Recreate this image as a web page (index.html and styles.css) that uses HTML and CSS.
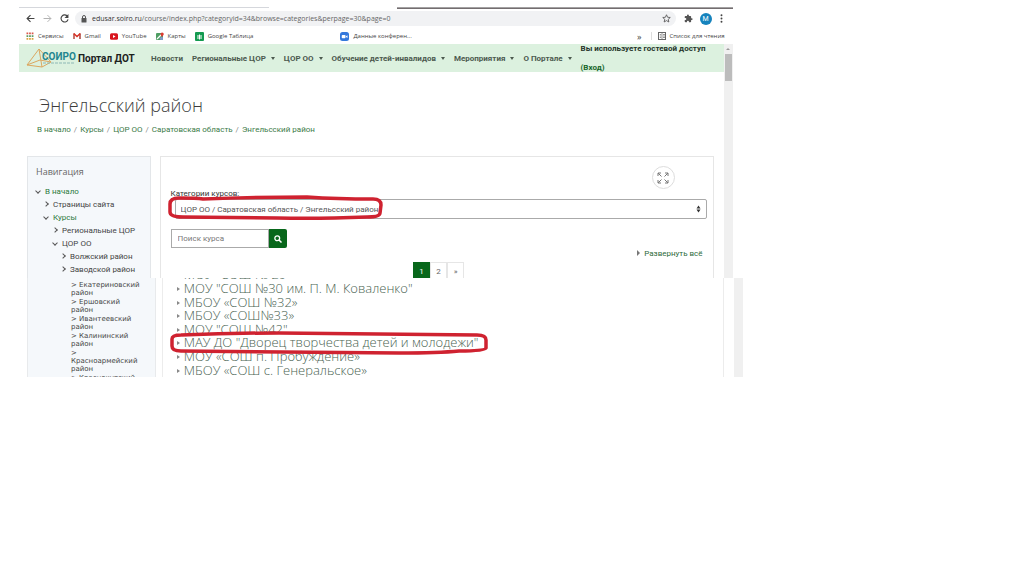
FILE: index.html
```
<!DOCTYPE html>
<html lang="ru">
<head>
  <meta charset="UTF-8">
  <meta name="viewport" content="width=device-width, initial-scale=1.0">
  <title>Энгельсский район</title>
  <link rel="stylesheet" href="styles.css">
</head>
<body>
  <div class="browser">
    <div class="tab-edge"><span class="edge-light"></span><span class="edge-dark"></span></div>
    <div class="toolbar">
      <button class="tool" aria-label="Назад"><svg width="9" height="9" viewBox="0 0 16 16"><path d="M15 8H2M8 2L2 8l6 6" fill="none" stroke="#444" stroke-width="2"/></svg></button>
      <button class="tool" aria-label="Вперёд"><svg width="9" height="9" viewBox="0 0 16 16"><path d="M1 8h13M8 2l6 6-6 6" fill="none" stroke="#aaa" stroke-width="1.6"/></svg></button>
      <button class="tool" aria-label="Обновить"><svg width="9" height="9" viewBox="0 0 16 16"><path d="M13.5 4.5A6.3 6.3 0 1 0 14.3 9.500" fill="none" stroke="#444" stroke-width="2"/><path d="M15 0v7H8z" fill="#444"/></svg></button>
      <div class="address">
        <svg width="6" height="8" viewBox="0 0 12 16"><rect x="1" y="6" width="10" height="9" rx="1" fill="#555"/><path d="M3 7V4a3 3 0 0 1 6 0v3" fill="none" stroke="#555" stroke-width="2"/></svg>
        <div class="url"><span>edusar.soiro.ru</span>/course/index.php?categoryid=34&amp;browse=categories&amp;perpage=30&amp;page=0</div>
        <svg width="9" height="9" viewBox="0 0 18 18"><path d="M9 1.500l2.200 5 5.300.5-4 3.600 1.200 5.400L9 13.200 4.300 16l1.200-5.400-4-3.600 5.300-.5z" fill="none" stroke="#555" stroke-width="1.700"/></svg>
      </div>
      <svg class="puzzle" width="9" height="9" viewBox="0 0 24 24"><path d="M20.500 11H19V7a2 2 0 0 0-2-2h-4V3.500a2.500 2.500 0 0 0-5 0V5H4a2 2 0 0 0-2 2v3.800h1.500a2.700 2.700 0 0 1 0 5.400H2V20a2 2 0 0 0 2 2h3.800v-1.500a2.700 2.700 0 0 1 5.400 0V22H17a2 2 0 0 0 2-2v-4h1.500a2.500 2.500 0 0 0 0-5z" fill="#555"/></svg>
      <span class="avatar">М</span>
      <svg class="dots" width="3" height="9" viewBox="0 0 4 14"><circle cx="2" cy="2" r="1.500"/><circle cx="2" cy="7" r="1.500"/><circle cx="2" cy="12" r="1.500"/></svg>
    </div>

    <div class="bookmarks">
      <a href="#"><svg width="8" height="8" viewBox="0 0 16 16"><path d="M1 2.500h14" stroke="#d9574a" stroke-width="3.500" stroke-dasharray="3.500 1.700"/><path d="M1 8h14" stroke="#5b9b62" stroke-width="3.500" stroke-dasharray="3.500 1.700"/><path d="M1 13.500h14" stroke="#d8a33b" stroke-width="3.500" stroke-dasharray="3.500 1.700"/></svg>Сервисы</a>
      <a href="#"><svg width="8" height="8" viewBox="0 0 16 14"><path d="M2 13V2" stroke="#b5483f" stroke-width="3"/><path d="M14 13V2" stroke="#a8423a" stroke-width="3"/><path d="M1.500 2L8 8l6.500-6" fill="none" stroke="#d93025" stroke-width="3.200"/></svg>Gmail</a>
      <a href="#"><svg width="8" height="7" viewBox="0 0 16 13"><rect width="16" height="13" rx="3" fill="#d9141e"/><path d="M6 3.500v6l5-3z" fill="#fff"/></svg>YouTube</a>
      <a href="#"><svg width="8" height="8" viewBox="0 0 16 16"><rect y="2" width="14" height="14" rx="2" fill="#4f9e63"/><path d="M2 14l9-9" stroke="#fff" stroke-width="2.500"/><path d="M9 16l5 0 0-5-3-2-4 4z" fill="#7f9cc8"/><path d="M12 10c-2-3-3-4-3-6a3.200 3.200 0 0 1 6.500 0c0 2-1.500 3-3.500 6z" fill="#dd3b30"/></svg>Карты</a>
      <a href="#"><svg width="9" height="9" viewBox="0 0 18 18"><rect width="18" height="18" rx="2" fill="#149a50"/><path d="M4 8h10M4 12h10M9 5v10" stroke="#fff" stroke-width="2"/></svg>Google Таблица</a>
      <a href="#" class="conference"><svg width="9" height="9" viewBox="0 0 18 18"><rect width="18" height="18" rx="5" fill="#3478dc"/><rect x="3.500" y="6" width="7.500" height="6.500" rx="1.500" fill="#fff"/><path d="M12 8.500l3-2v5.500l-3-2z" fill="#fff"/></svg>Данные конферен...</a>
      <span class="more">»</span>
      <a href="#" class="reading"><svg width="8" height="8" viewBox="0 0 16 16"><rect x="1" y="1" width="14" height="14" fill="none" stroke="#666" stroke-width="2"/><path d="M8 1v14M3.500 5h3M3.500 8h3M3.500 11h3M10 5h4M10 8h4M10 11h4" stroke="#777" stroke-width="1.500"/></svg>Список для чтения</a>
    </div>

    <div class="viewport">
      <div class="page">
        <header class="site-header">
          <a href="#" class="brand">
            <svg width="52" height="20" viewBox="0 0 52 20">
              <path d="M1 17L13 1l12 13-9 5zM13 1l3 18M1 17l13-5 11 2" fill="none" stroke="#dba75f" stroke-width="1"/>
              <text x="16" y="12" class="logo-text">СОИРО</text>
              <path d="M17 15h32" stroke="#8db8b5" stroke-width="1" stroke-dasharray="3 1"/>
            </svg>
            <span>Портал ДОТ</span>
          </a>
          <nav class="menu">
            <a href="#">Новости</a>
            <a href="#" class="drop">Региональные ЦОР</a>
            <a href="#" class="drop">ЦОР ОО</a>
            <a href="#" class="drop">Обучение детей-инвалидов</a>
            <a href="#" class="drop">Мероприятия</a>
            <a href="#" class="drop">О Портале</a>
          </nav>
          <div class="guest">Вы используете гостевой доступ<a href="#">(Вход)</a></div>
        </header>

        <h1>Энгельсский район</h1>
        <nav class="breadcrumb">
          <a href="#">В начало</a><i>/</i><a href="#">Курсы</a><i>/</i><a href="#">ЦОР ОО</a><i>/</i><a href="#">Саратовская область</a><i>/</i><a href="#">Энгельсский район</a>
        </nav>

        <div class="columns">
          <aside class="sidebar">
            <h2>Навигация</h2>
            <ul class="tree">
              <li class="open green">В начало</li>
              <li class="level-1">Страницы сайта</li>
              <li class="level-1 open green">Курсы</li>
              <li class="level-2">Региональные ЦОР</li>
              <li class="level-2 open">ЦОР ОО</li>
              <li class="level-3">Волжский район</li>
              <li class="level-3">Заводской район</li>
            </ul>
          </aside>
          <main class="card">
            <button class="expand" aria-label="На весь экран"><svg width="12" height="12" viewBox="0 0 24 24"><path d="M2 8V2h6M2 2l7 7M16 2h6v6M22 2l-7 7M2 16v6h6M2 22l7-7M16 22h6v-6M22 22l-7-7" fill="none" stroke="#777" stroke-width="2"/></svg></button>
            <label class="category-label" for="category">Категории курсов:</label>
            <div class="select-wrap">
              <select id="category"><option>ЦОР ОО / Саратовская область / Энгельсский район</option></select>
              <svg class="arrows" width="5" height="8" viewBox="0 0 10 16"><path d="M5 1l4 6H1zM5 15l4-6H1z" fill="#333"/></svg>
              <svg class="mark" viewBox="0 0 216 26" preserveAspectRatio="none"><path d="M12 3Q30 3 36 4Q90 2 140 2Q170 4 206 4Q214 4 214 10L213 18Q213 22 200 22Q150 24 110 23L16 22Q3 22 3 17L3 9Q3 3 12 3" fill="none" stroke="#cf2230" stroke-width="3.500"/></svg>
            </div>
            <form class="search">
              <input type="text" placeholder="Поиск курса" aria-label="Поиск курса">
              <button type="button" aria-label="Найти"><svg width="8" height="8" viewBox="0 0 16 16"><circle cx="6.500" cy="6.500" r="4.800" fill="none" stroke="#fff" stroke-width="2.600"/><path d="M10 10l5 5" stroke="#fff" stroke-width="3"/></svg></button>
            </form>
            <a href="#" class="expand-all">Развернуть всё</a>
            <div class="pages"><a href="#" class="current">1</a><a href="#">2</a><a href="#">»</a></div>
          </main>
        </div>
      </div>
      <div class="scrollbar"><span class="up"></span><span class="thumb"></span></div>
    </div>
  </div>

  <div class="lower">
    <ul class="districts">
      <li>Екатериновский район</li>
      <li>Ершовский<br>район</li>
      <li>Ивантеевский район</li>
      <li>Калининский район</li>
      <li>Красноармейский район</li>
      <li>Краснокутский</li>
    </ul>
    <div class="schools">
      <a href="#">МОУ "СОШ № 29"</a>
      <a href="#">МОУ "СОШ №30 им. П. М. Коваленко"</a>
      <a href="#">МБОУ «СОШ №32»</a>
      <a href="#">МБОУ «СОШ№33»</a>
      <a href="#">МОУ "СОШ №42"</a>
      <a href="#" class="picked">МАУ ДО "Дворец творчества детей и молодежи"
        <svg class="mark" viewBox="0 0 320 24" preserveAspectRatio="none"><path d="M12 4Q60 2 110 2L308 4Q317 4 317 9L317 17Q316 20 290 20Q270 22 230 22L12 20Q3 20 3 15L3 8Q3 4 12 4" fill="none" stroke="#cf2230" stroke-width="3.500"/></svg>
      </a>
      <a href="#">МОУ «СОШ п. Пробуждение»</a>
      <a href="#">МБОУ «СОШ с. Генеральское»</a>
    </div>
    <div class="scrollbar"></div>
  </div>
</body>
</html>
```
FILE: styles.css
```
* {
  box-sizing: border-box;
}

body {
  margin: 0;
  padding-left: 19px;
  background: #fff;
  color: #555;
  font-family: Roboto, "Noto Sans", sans-serif;
  font-size: 8px;
}

a {
  color: inherit;
  text-decoration: none;
}

button {
  border: 0;
  padding: 0;
  background: none;
}

ul, h1, h2 {
  margin: 0;
  padding: 0;
  list-style: none;
  font-weight: normal;
}

svg {
  flex: none;
}

/* Browser window */
.browser {
  width: 71%;
  padding-top: 7px;
}

.tab-edge {
  display: flex;
  justify-content: space-between;
  height: 2px;
}

.edge-light {
  width: 35%;
  height: 1px;
  background: #d5d7dc;
}

.edge-dark {
  width: 47%;
  background: linear-gradient(#bbb, #5c5356);
}

.toolbar {
  display: flex;
  align-items: center;
  height: 19px;
  padding: 0 10px 0 3px;
}

.tool {
  display: flex;
  width: 17px;
  justify-content: center;
}

.address {
  display: flex;
  align-items: center;
  flex: 1;
  height: 15px;
  margin-left: 2px;
  padding: 0 5px 0 6px;
  border-radius: 8px;
  background: #f1f2f4;
}

.url {
  flex: 1;
  margin-left: 5px;
  color: #666;
  font-family: "Open Sans", sans-serif;
  font-size: 7px;
}

.url span {
  color: #333;
}

.puzzle {
  margin-left: 8px;
}

.avatar {
  width: 12px;
  height: 12px;
  margin: 0 8px 0 7px;
  border-radius: 50%;
  background: #1683bd;
  color: #fff;
  font-size: 7px;
  line-height: 12px;
  text-align: center;
}

.dots {
  fill: #444;
}

.bookmarks {
  display: flex;
  align-items: center;
  height: 16px;
  padding: 0 8px 0 7px;
  gap: 9px;
  color: #444;
  font-family: "Open Sans", sans-serif;
  font-size: 6px;
  white-space: nowrap;
}

.bookmarks a {
  display: flex;
  align-items: center;
  gap: 4px;
}

.bookmarks .conference {
  margin-left: 78px;
}

.more {
  margin-left: auto;
  font-size: 9px;
}

.bookmarks .reading {
  padding-left: 6px;
  border-left: 1px solid #ddd;
}

/* Site page */
.viewport {
  display: flex;
  height: 234px;
  overflow: hidden;
}

.page {
  flex: 1;
  min-width: 0;
}

.scrollbar {
  width: 9px;
  background: #f0f0f0;
}

.scrollbar .up {
  display: block;
  width: 0;
  margin: 4px auto;
  border: 2px solid transparent;
  border-top: 0;
  border-bottom-color: #999;
}

.scrollbar .thumb {
  display: block;
  height: 27px;
  margin: 0 1px;
  background: #bcbcbc;
}

.site-header {
  display: flex;
  align-items: center;
  height: 28px;
  padding-left: 7px;
  background: #dcf1df;
  color: #4c5a4f;
  font-weight: bold;
  white-space: nowrap;
}

.brand {
  display: flex;
  align-items: center;
  width: 125px;
  color: #1c211d;
  font-size: 10px;
}

.logo-text {
  fill: #23858f;
  font-size: 10px;
}

.menu {
  display: flex;
  gap: 9px;
}

.drop::after {
  content: "";
  display: inline-block;
  margin-left: 5px;
  border: 2px solid transparent;
  border-top: 3px solid #4c5a4f;
  border-bottom: 0;
  vertical-align: 1px;
}

.guest {
  margin-left: 9px;
  color: #26352a;
  line-height: 19px;
}

.guest a {
  display: block;
  color: #17662a;
}

h1 {
  margin: 20px 0 0 20px;
  color: #3c3c3c;
  font-family: "Open Sans", sans-serif;
  font-size: 18px;
  font-weight: 300;
  line-height: 26px;
}

.breadcrumb {
  display: flex;
  gap: 3px;
  margin: 6px 0 0 18px;
  color: #3b7a47;
  line-height: 12px;
}

.breadcrumb i {
  color: #888;
  font-style: normal;
}

.columns {
  display: flex;
  gap: 9px;
  height: 130px;
  margin: 20px 10px 0 8px;
}

.sidebar {
  width: 18%;
  padding: 8px;
  border: 1px solid #e3e6e9;
  background: #f5f8fb;
}

h2 {
  color: #666;
  font-family: "Open Sans", sans-serif;
  font-size: 9px;
  line-height: 14px;
}

.tree {
  margin-top: 6px;
  color: #444;
  line-height: 13px;
  white-space: nowrap;
}

.tree li::before {
  content: "";
  display: inline-block;
  width: 3px;
  height: 3px;
  margin: 0 5px 1px 0;
  border: solid #555;
  border-width: 1px 1px 0 0;
  transform: rotate(45deg);
}

.tree .open::before {
  transform: rotate(135deg);
}

.tree .green {
  color: #2c7a3c;
}

.tree .level-1 {
  padding-left: 8px;
}

.tree .level-2 {
  padding-left: 17px;
}

.tree .level-3 {
  padding-left: 25px;
}

.card {
  display: flex;
  flex-direction: column;
  align-items: flex-start;
  flex: 1;
  padding: 9px 6px 0 10px;
  border: 1px solid #e6e6e6;
}

.expand {
  display: flex;
  align-items: center;
  justify-content: center;
  align-self: flex-end;
  width: 23px;
  height: 23px;
  margin-right: 32px;
  border: 1px solid #ddd;
  border-radius: 50%;
}

.category-label {
  color: #333;
  line-height: 10px;
}

.select-wrap {
  position: relative;
  align-self: stretch;
  padding-left: 4px;
}

select {
  display: block;
  width: 100%;
  height: 20px;
  padding: 0 5px;
  border: 1px solid #aaa;
  border-radius: 2px;
  background: #fff;
  color: #555;
  font: inherit;
  appearance: none;
}

.arrows {
  position: absolute;
  top: 6px;
  right: 6px;
}

/* Red outline drawn by hand over the page */
.mark {
  position: absolute;
  top: -4px;
  left: -4px;
  width: 216px;
  height: 26px;
}

.search {
  display: flex;
  margin-top: 10px;
}

.search input {
  width: 98px;
  height: 19px;
  padding: 0 6px;
  border: 1px solid #aaa;
  font: inherit;
}

.search input::placeholder {
  color: #777;
}

.search button {
  display: flex;
  align-items: center;
  justify-content: center;
  width: 18px;
  background: #08671b;
  border-radius: 0 2px 2px 0;
}

.expand-all {
  align-self: flex-end;
  margin-right: 4px;
  color: #2d6a3a;
  line-height: 12px;
}

.expand-all::before {
  content: "";
  display: inline-block;
  margin-right: 4px;
  border: 3px solid transparent;
  border-left-color: #777;
  border-right: 0;
}

.pages {
  display: flex;
  align-self: center;
  margin-top: 2px;
}

.pages a {
  width: 17px;
  height: 20px;
  border: 1px solid #e6e6e6;
  color: #666;
  line-height: 18px;
  text-align: center;
}

.pages .current {
  border-color: #08671b;
  background: #08671b;
  color: #fff;
}

/* Lower part of the page, scrolled down */
.lower {
  display: flex;
  width: 72%;
  height: 99px;
  padding-left: 8px;
  overflow: hidden;
}

.districts {
  display: flex;
  flex-direction: column;
  gap: 1px;
  width: 18%;
  padding: 3px 11px 0 43px;
  border: solid #e8eaec;
  border-width: 0 1px;
  background: #f5f8fb;
  color: #444;
  font-family: "DejaVu Sans", sans-serif;
  font-size: 7px;
  line-height: 8px;
}

.districts li::before {
  content: "> ";
}

.schools {
  display: grid;
  grid-auto-rows: 1fr;
  align-items: center;
  flex: 1;
  margin: -10px 10px 0 6px;
  padding-left: 14px;
  border: solid #ececec;
  border-width: 0 1px;
  color: #4a6352;
  font-family: "Open Sans", sans-serif;
  font-size: 13px;
  font-weight: 300;
  line-height: 13px;
}

.schools a::before {
  content: "";
  display: inline-block;
  margin-right: 4px;
  border: 2px solid transparent;
  border-left: 3px solid #888;
  border-right: 0;
  vertical-align: 2px;
}

.picked {
  position: relative;
}

.picked .mark {
  top: -5px;
  left: -8px;
  width: 320px;
  height: 24px;
}
```
